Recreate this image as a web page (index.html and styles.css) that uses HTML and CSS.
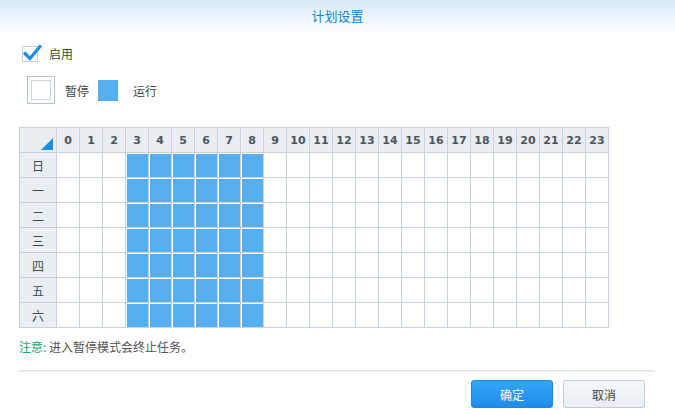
FILE: index.html
```html
<!DOCTYPE html>
<html lang="zh">
<head>
<meta charset="utf-8">
<link rel="stylesheet" href="styles.css">
</head>
<body>
<div class="dialog">
  <div class="titlebar">计划设置</div>
  <div class="content">
    <label class="enable">
      <span class="checkbox">
        <svg viewBox="0 0 20 20" width="20" height="20"><path d="M3 10.5 L8 15.5 L18 3.5" fill="none" stroke="#1a8fe6" stroke-width="3.2" stroke-linecap="round" stroke-linejoin="round"/></svg>
      </span>
      <span class="lbl">启用</span>
    </label>
    <div class="legend">
      <span class="sw-off"><span class="sw-off-inner"></span></span>
      <span class="legend-text">暂停</span>
      <span class="sw-on"></span>
      <span class="legend-text">运行</span>
    </div>
    <div class="grid" id="grid"></div>
    <div class="note"><span class="note-key">注意:</span> 进入暂停模式会终止任务。</div>
    <div class="sep"></div>
    <div class="buttons">
      <button class="btn btn-primary">确定</button>
      <button class="btn btn-default">取消</button>
    </div>
  </div>
</div>
<script>
(function(){
  var g = document.getElementById('grid');
  var html = '<div class="cell corner"><span class="tri"></span></div>';
  for (var h = 0; h < 24; h++) html += '<div class="cell head">' + h + '</div>';
  var days = ['日','一','二','三','四','五','六'];
  for (var d = 0; d < 7; d++) {
    html += '<div class="cell day">' + days[d] + '</div>';
    for (var h2 = 0; h2 < 24; h2++) {
      html += '<div class="cell slot' + (h2 >= 3 && h2 <= 8 ? ' on' : '') + '"></div>';
    }
  }
  g.innerHTML = html;
})();
</script>
</body>
</html>
```
FILE: styles.css
```css
html, body {
  margin: 0;
  padding: 0;
  background: #fff;
}
body {
  width: 675px;
  height: 415px;
  overflow: hidden;
  font-family: "Noto Sans CJK SC", "Liberation Sans", sans-serif;
  font-size: 12px;
  color: #444;
}
.titlebar {
  height: 36px;
  line-height: 31px;
  text-align: center;
  color: #0f86d8;
  font-size: 13px;
  background: linear-gradient(to bottom, #d9e9f8 0%, #eef5fc 50%, #ffffff 100%);
}
.content {
  padding: 10px 20px 0 19px;
}
.enable {
  display: flex;
  align-items: center;
  height: 16px;
  padding-left: 3px;
}
.checkbox {
  position: relative;
  width: 14px;
  height: 14px;
  border: 1px solid #c5ced9;
  background: #fff;
}
.checkbox svg {
  position: absolute;
  left: -1px;
  top: -4px;
}
.lbl {
  margin-left: 11px;
  line-height: 16px;
}
.legend {
  display: flex;
  align-items: center;
  margin-top: 14px;
  padding-left: 8px;
  height: 28px;
}
.sw-off {
  box-sizing: border-box;
  width: 28px;
  height: 28px;
  border: 1px solid #b7bfc8;
  padding: 3px;
}
.sw-off-inner {
  display: block;
  box-sizing: border-box;
  width: 20px;
  height: 20px;
  border: 1px solid #ccd5df;
}
.legend-text {
  margin-left: 10px;
  margin-right: 9px;
}
.sw-on {
  width: 20px;
  height: 21px;
  background: #55aef0;
  margin-left: 0;
  margin-right: 5px;
}
.grid {
  margin-top: 23px;
  display: grid;
  grid-template-columns: 37px repeat(24, 23px);
  grid-auto-rows: 25px;
  width: max-content;
  border-left: 1px solid #c9d1dc;
  border-top: 1px solid #c9d1dc;
}
.cell {
  box-sizing: border-box;
  border-right: 1px solid #c9d1dc;
  border-bottom: 1px solid #c9d1dc;
  background: #fff;
  display: flex;
  align-items: center;
  justify-content: center;
}
.corner, .head, .day {
  background: #e9eef3;
}
.corner {
  position: relative;
}
.tri {
  position: absolute;
  right: 3px;
  bottom: 2px;
  width: 0;
  height: 0;
  border-left: 12px solid transparent;
  border-bottom: 12px solid #1a8ee8;
}
.head {
  font-family: "DejaVu Sans", Verdana, sans-serif;
  font-weight: bold;
  font-size: 11px;
  color: #4b5560;
}
.day {
  font-size: 12px;
  color: #3f4850;
}
.slot.on {
  background: #55aef0;
  box-shadow: inset 1px 1px 0 #fff;
}
.note {
  margin-top: 11px;
  line-height: 16px;
  color: #555;
}
.note-key {
  color: #1aa36f;
}
.sep {
  margin-top: 15px;
  height: 2px;
  background: linear-gradient(to bottom, #dcdfe3, #f2f3f5);
}
.buttons {
  display: flex;
  justify-content: flex-end;
  gap: 10px;
  margin-top: 8px;
  padding-right: 10px;
}
.btn {
  box-sizing: border-box;
  width: 82px;
  height: 28px;
  border-radius: 3px;
  font-family: "Noto Sans CJK SC", "Liberation Sans", sans-serif;
  font-size: 12px;
  padding: 0;
}
.btn-primary {
  color: #fff;
  border: 1px solid #1b87e0;
  background: linear-gradient(to bottom, #34a6f7, #1e8beb);
}
.btn-default {
  color: #444;
  border: 1px solid #c3ccd8;
  background: linear-gradient(to bottom, #f6f9fc, #e8eef4);
}
```
